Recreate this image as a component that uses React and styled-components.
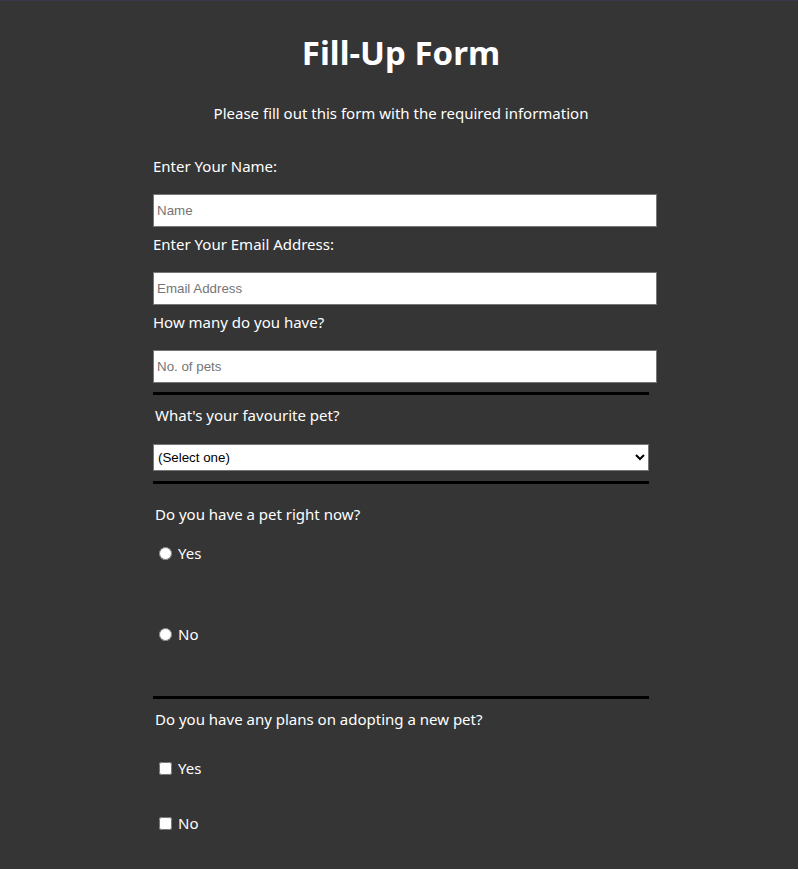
import React from "react";
import styled, { createGlobalStyle } from "styled-components";

const GlobalStyle = createGlobalStyle`
  * { box-sizing: border-box; }
  body {
    margin: 0;
    background: #fff;
    color: #fff;
    font-family: "Noto Sans", "Open Sans", sans-serif;
    font-size: 15px;
    line-height: 20px;
  }
`;

const Page = styled.main`
  min-height: calc(100vh - 1px);
  margin-right: 1px;
  background: #353535;
  border-top: 1px solid #3a384e;
  padding: 32px 0 32px 4px;
`;

const Header = styled.header`
  text-align: center;
`;

const Title = styled.h1`
  margin: 0;
  font-size: 33px;
  line-height: 40px;
`;

const Intro = styled.p`
  margin: 30px 0 0;
`;

const Form = styled.form`
  width: 100%;
  max-width: 496px;
  margin: 33px auto 0;
`;

const Fields = styled.div`
  display: flex;
  flex-direction: column;
  gap: 7px;
  margin-bottom: 9px;
`;

const Field = styled.div`
  display: flex;
  flex-direction: column;
  gap: 18px;
`;

const Input = styled.input`
  width: calc(100% + 8px);
  height: 33px;
  padding: 1px 3px;
  border: 1px solid #767676;
  font-family: "Liberation Sans", Arial, sans-serif;
  &::placeholder { color: #757575; }
`;

const Section = styled.fieldset`
  margin: 0;
  padding: ${(p) => p.$top}px 0 ${(p) => p.$bottom}px;
  border: 0;
  border-top: 3px solid #000;
`;

const Question = styled.span`
  display: block;
  padding-left: 2px;
`;

const Select = styled.select`
  display: block;
  width: 100%;
  height: 27px;
  margin-top: 19px;
  border: 1px solid #767676;
  border-radius: 0;
  background: #fff;
  font-family: "Liberation Sans", Arial, sans-serif;
`;

const Options = styled.div`
  display: flex;
  flex-direction: column;
  align-items: flex-start;
  gap: ${(p) => p.$gap}px;
  margin-top: ${(p) => p.$top}px;
`;

const Option = styled.label`
  display: flex;
  align-items: center;
  gap: 6px;
  padding-left: 6px;
`;

const Tick = styled.input`
  width: 13px;
  height: 13px;
  margin: 0;
`;

const fields = [
  { id: "name", label: "Enter Your Name:", hint: "Name", type: "text" },
  { id: "email", label: "Enter Your Email Address:", hint: "Email Address", type: "email" },
  { id: "count", label: "How many do you have?", hint: "No. of pets", type: "number" },
];

function Choices({ type, name, gap, top }) {
  return (
    <Options $gap={gap} $top={top}>
      {["Yes", "No"].map((text) => (
        <Option key={text}>
          <Tick type={type} name={name} value={text} />
          {text}
        </Option>
      ))}
    </Options>
  );
}

export default function App() {
  return (
    <Page>
      <GlobalStyle />
      <Header>
        <Title>Fill-Up Form</Title>
        <Intro>Please fill out this form with the required information</Intro>
      </Header>
      <Form>
        <Fields>
          {fields.map((f) => (
            <Field key={f.id}>
              <label htmlFor={f.id}>{f.label}</label>
              <Input id={f.id} type={f.type} placeholder={f.hint} />
            </Field>
          ))}
        </Fields>
        <Section $top={10} $bottom={10}>
          <Question as="label" htmlFor="pet">What's your favourite pet?</Question>
          <Select id="pet" defaultValue="">
            <option value="">(Select one)</option>
            <option>Dog</option>
            <option>Cat</option>
          </Select>
        </Section>
        <Section $top={20} $bottom={52} aria-labelledby="now">
          <Question id="now">Do you have a pet right now?</Question>
          <Choices type="radio" name="now" gap={61} top={19} />
        </Section>
        <Section $top={10} $bottom={0} aria-labelledby="plans">
          <Question id="plans">Do you have any plans on adopting a new pet?</Question>
          <Choices type="checkbox" name="plans" gap={35} top={29} />
        </Section>
      </Form>
    </Page>
  );
}
